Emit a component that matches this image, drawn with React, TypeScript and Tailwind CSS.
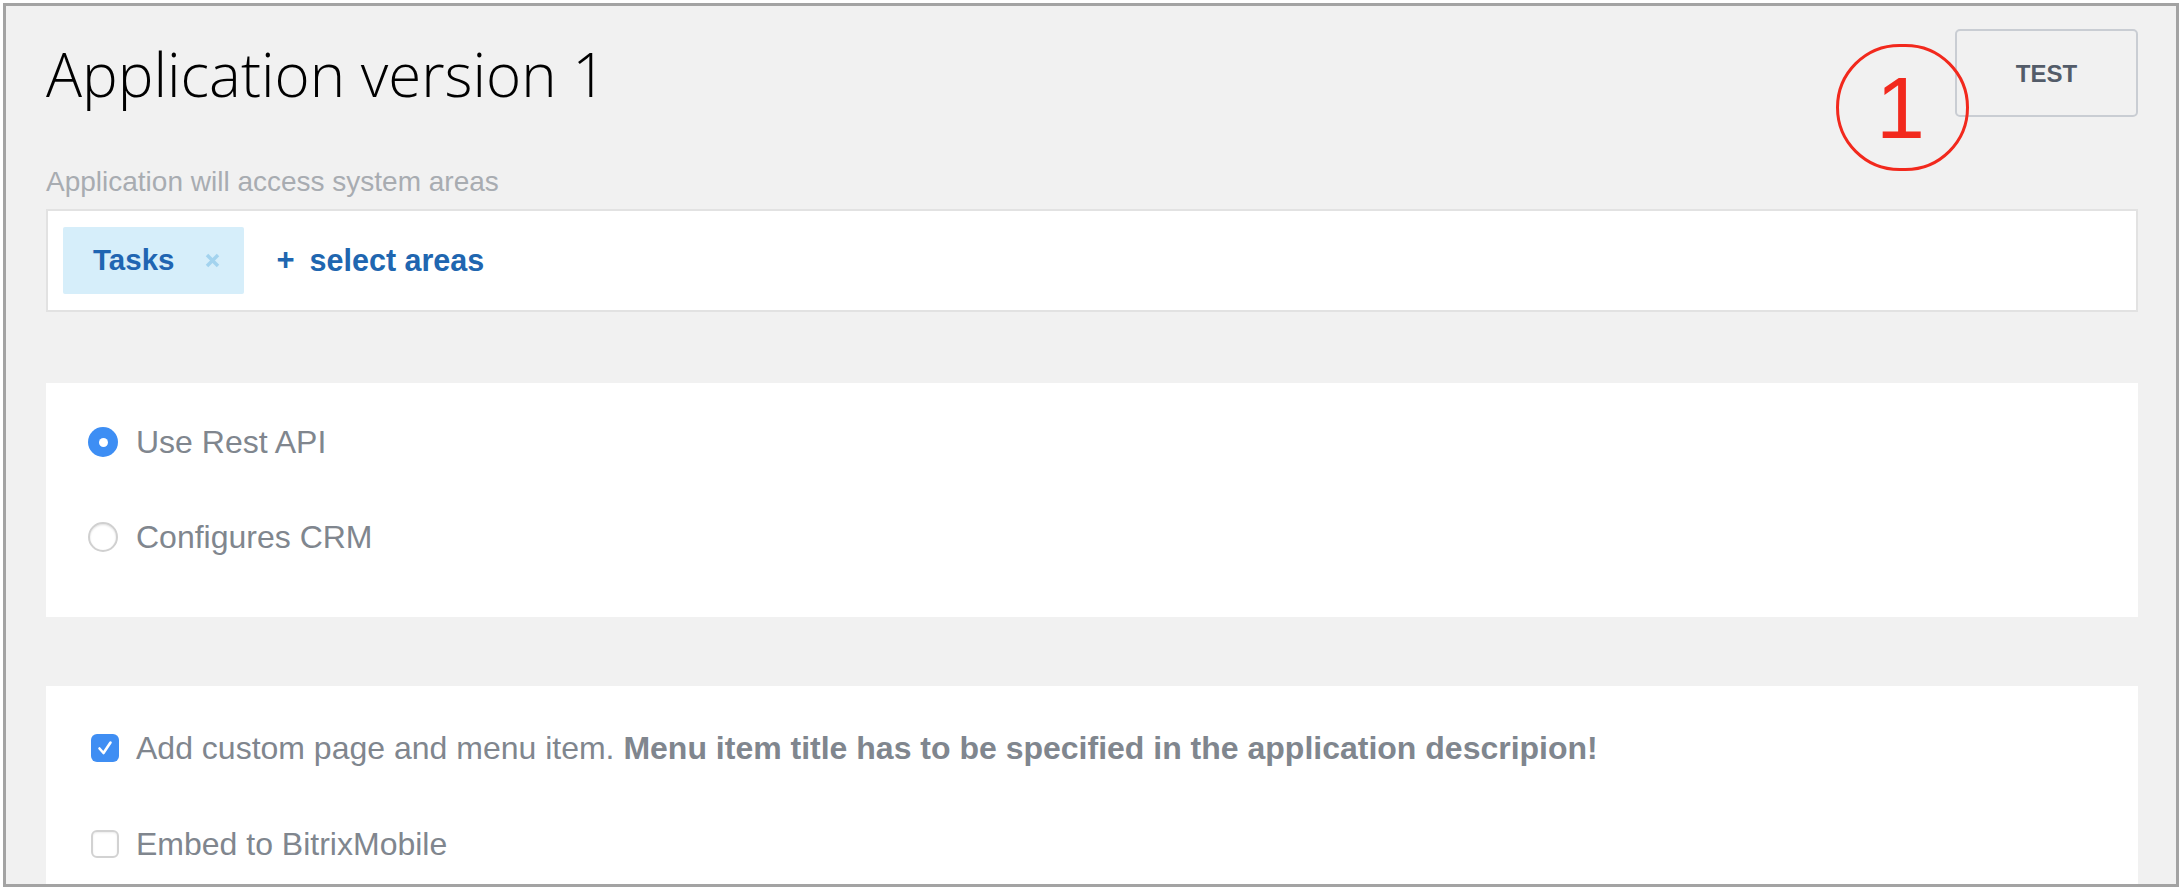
import React from "react";

const sans = { fontFamily: '"Liberation Sans", Arial, sans-serif' };

const Radio = ({ checked, label }: { checked: boolean; label: string }) => (
    <div className="flex items-center h-[40px]">
        {checked ? (
            <div className="w-[30px] h-[30px] rounded-full bg-[#3d8ef4] flex items-center justify-center">
                <div className="w-[9px] h-[9px] rounded-full bg-white" />
            </div>
        ) : (
            <div className="w-[30px] h-[30px] rounded-full bg-white border-2 border-[#d0d0d0] shadow-[inset_0_1px_2px_rgba(0,0,0,0.12)]" />
        )}
        <span className="ml-[18px] text-[32px] leading-[40px] text-[#80868e]">{label}</span>
    </div>
);

const Checkbox = ({ checked, children }: { checked: boolean; children: React.ReactNode }) => (
    <div className="flex items-center h-[40px]">
        {checked ? (
            <div className="w-[28px] h-[28px] rounded-[6px] bg-[#3f8ef3] flex items-center justify-center">
                <svg width="18" height="18" viewBox="0 0 18 18" fill="none">
                    <path d="M3.5 9.5 L7.5 14 L14.5 3.5" stroke="white" strokeWidth="2.6" strokeLinecap="round" strokeLinejoin="round" />
                </svg>
            </div>
        ) : (
            <div className="w-[28px] h-[28px] rounded-[6px] bg-white border-2 border-[#d2d2d2] shadow-[inset_0_1px_2px_rgba(0,0,0,0.08)]" />
        )}
        <span className="ml-[17px] text-[32px] leading-[40px] text-[#80868e]">{children}</span>
    </div>
);

const App: React.FC = () => {
    return (
        <div className="w-[2182px] h-[892px] bg-white pt-[3px] pb-[5px] px-[3px] flex flex-col" style={sans}>
            <div className="relative flex-1 border-[3px] border-[#a3a3a3] bg-[#f1f1f1] overflow-hidden pl-[40px] pr-[38px]">
                {/* header */}
                <div className="flex justify-between items-start pt-[23px]">
                    <h1
                        className="mt-[15px] text-[60px] leading-none font-light text-black"
                        style={{ fontFamily: '"Open Sans", sans-serif' }}
                    >
                        Application version 1
                    </h1>
                    <button className="w-[183px] h-[88px] border-2 border-[#c9cdd3] rounded-[5px] pt-[2px] text-[24px] font-bold text-[#535c69]">
                        TEST
                    </button>
                </div>

                <div className="mt-[49px] text-[28px] leading-[32px] text-[#a8acb1]">Application will access system areas</div>

                <div className="mt-[11px] h-[103px] bg-white border-2 border-[#e2e2e2] flex items-center pl-[15px]">
                    <div className="h-[67px] bg-[#d6eefa] rounded-[2px] flex items-center pl-[30px] pr-[24px]">
                        <span className="text-[29.5px] font-bold text-[#1f65b2]">Tasks</span>
                        <svg className="ml-[31px]" width="15" height="15" viewBox="0 0 15 15">
                            <path d="M2 2 L13 13 M13 2 L2 13" stroke="#a3d3ee" strokeWidth="3.5" />
                        </svg>
                    </div>
                    <span className="ml-[32px] text-[31px] font-bold text-[#2066b0]">+</span>
                    <span className="ml-[15px] text-[30.5px] font-bold text-[#2066b0]">select areas</span>
                </div>

                <div className="mt-[71px] h-[234px] bg-white pt-[39px] pl-[42px] flex flex-col gap-[55px]">
                    <Radio checked label="Use Rest API" />
                    <Radio checked={false} label="Configures CRM" />
                </div>

                <div className="mt-[69px] bg-white pt-[42px] pb-[40px] pl-[45px] flex flex-col gap-[56px]">
                    <Checkbox checked>
                        Add custom page and menu item. <b className="font-bold">Menu item title has to be specified in the application descripion!</b>
                    </Checkbox>
                    <Checkbox checked={false}>Embed to BitrixMobile</Checkbox>
                </div>

                {/* red annotation mark */}
                <div className="absolute left-[1830px] top-[38px] w-[133px] h-[127px] rounded-full border-[3px] border-[#f2291d] flex items-center justify-center">
                    <span className="text-[88px] leading-none text-[#f2291d] -ml-[4px]">1</span>
                </div>
            </div>
        </div>
    );
};

export default App;
